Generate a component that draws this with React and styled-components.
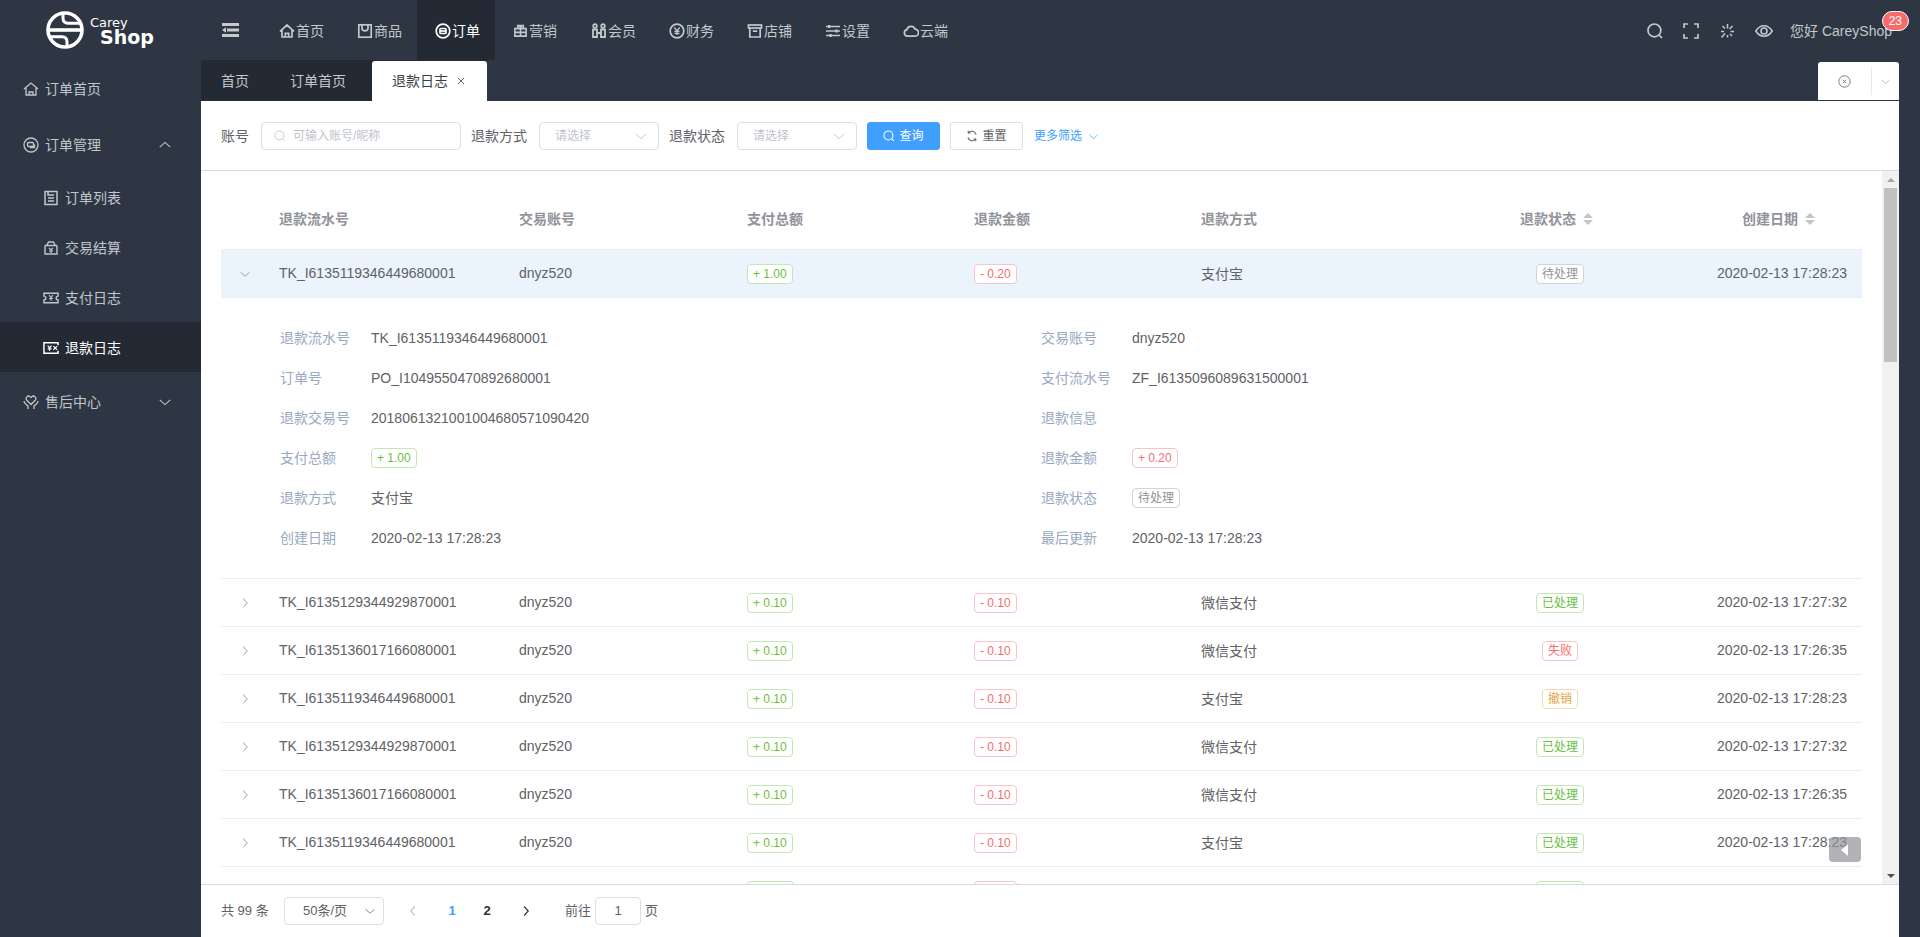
import React from 'react';
import styled, { createGlobalStyle } from 'styled-components';

const GlobalStyle = createGlobalStyle`
  html, body { margin: 0; padding: 0; height: 100%; overflow: hidden; background: #2d3642; }
  body { font-family: "Liberation Sans", "Noto Sans CJK SC", sans-serif; font-size: 14px; line-height: 20px; color: #606266; }
  * { box-sizing: border-box; }
  svg { flex: none; }
`;

const Shell = styled.div`display: flex; flex-direction: column; width: 1920px; height: 937px; background: #2d3642;`;
const Header = styled.header`display: flex; align-items: stretch; height: 60px; flex: none;`;
const Logo = styled.div`display: flex; align-items: center; width: 200px; padding-left: 46px; gap: 6px; color: #fff;`;
const LogoWords = styled.div`display: flex; flex-direction: column; padding-top: 2px; font-family: "DejaVu Sans", sans-serif; line-height: 1;`;
const LogoCarey = styled.span`font-size: 13px; font-weight: 400; height: 12px;`;
const LogoShop = styled.span`font-size: 19px; font-weight: 700; margin-left: 10px;`;
const Fold = styled.div`display: flex; align-items: center; width: 61px; padding-left: 22px; color: #c5c9ce;`;
const TopNav = styled.nav`display: flex;`;
const TopItem = styled.a`
  display: flex; align-items: center; width: 78px; padding: 1px 0 0 18px; gap: 1px;
  color: ${p => (p.$active ? '#fff' : '#c3c8ce')};
  background: ${p => (p.$active ? '#232a33' : 'transparent')};
`;
const Tools = styled.div`display: flex; align-items: center; margin-left: auto; padding: 1px 28px 0 0; color: #c3c8ce;`;
const ToolIcon = styled.span`display: flex; width: 36px;`;
const User = styled.span`position: relative; margin-left: -1px; color: #c3c8ce; white-space: nowrap;`;
const Badge = styled.span`
  position: absolute; top: -10px; right: -17px; height: 20px; padding: 0 6px; line-height: 18px;
  border: 1px solid #fff; border-radius: 10px; background: #f56c6c; color: #fff; font-size: 12px;
`;
const Body = styled.div`display: flex; flex: 1; min-height: 0;`;
const Sidebar = styled.aside`width: 201px; flex: none; padding-top: 4px;`;
const SideItem = styled.a`
  display: flex; align-items: center; height: 50px; gap: 6px;
  padding: ${p => (p.$low ? '2px' : '0')} 29px 0 ${p => (p.$sub ? '43px' : '23px')};
  margin-bottom: ${p => p.$after || 0}px;
  color: ${p => (p.$active ? '#fff' : '#c0c6cc')};
  background: ${p => (p.$active ? '#232a33' : 'transparent')};
`;
const SideArrow = styled.span`display: flex; margin-left: auto; color: #c0c6cc;`;
const Main = styled.main`display: flex; flex-direction: column; width: 1698px; flex: none;`;
const TabStrip = styled.div`display: flex; height: 41px; flex: none;`;
const TabList = styled.div`display: flex; background: #232a33; border-top-left-radius: 3px;`;
const Tab = styled.a`
  display: flex; align-items: center; height: 41px; width: ${p => p.$w}px; padding-left: 20px; color: #c3c8ce;
`;
const ActiveTab = styled.a`
  display: flex; align-items: center; gap: 8px; height: 40px; margin-top: 1px; padding: 0 19px 0 20px;
  background: #fff; color: #3a3f47; border-radius: 3px 3px 0 0; width: 115px;
`;
const TabActions = styled.div`
  display: flex; align-items: center; margin: 2px 0 1px auto; width: 81px; background: #fff; border-radius: 3px 3px 0 0; color: #66707c;
`;
const TabClose = styled.span`display: flex; justify-content: center; width: 53px;`;
const TabMore = styled.span`display: flex; justify-content: center; width: 28px; height: 28px; align-items: center; border-left: 1px solid #e6e8ec; color: #9aa3ad;`;
const Panel = styled.section`display: flex; flex-direction: column; flex: 1; min-height: 0; background: #fff;`;
const FilterBar = styled.div`
  display: flex; align-items: center; height: 70px; flex: none; padding: 1px 0 0 20px; border-bottom: 1px solid #d3dce6;
`;
const FieldLabel = styled.label`margin-right: 12px; white-space: nowrap;`;
const TextInput = styled.div`
  display: flex; align-items: center; gap: 7px; width: 200px; height: 28px; padding-left: 12px; margin-right: 10px;
  border: 1px solid #dcdfe6; border-radius: 4px; font-size: 12px; color: #c0c4cc;
`;
const SelectBox = styled.div`
  display: flex; align-items: center; justify-content: space-between; width: 120px; height: 28px; padding: 0 10px 0 15px;
  margin-right: 10px; border: 1px solid #dcdfe6; border-radius: 4px; font-size: 12px; color: #c0c4cc;
`;
const Btn = styled.button`
  display: inline-flex; align-items: center; justify-content: center; gap: 4px; width: 73px; height: 28px; margin-right: 10px; padding: 0;
  font: inherit; font-size: 12px; border-radius: 3px;
  border: 1px solid ${p => (p.$primary ? '#409eff' : '#dcdfe6')};
  background: ${p => (p.$primary ? '#409eff' : '#fff')};
  color: ${p => (p.$primary ? '#fff' : '#606266')};
`;
const MoreLink = styled.a`display: flex; align-items: center; gap: 6px; padding-left: 1px; font-size: 12px; color: #409eff;`;
const TableWrap = styled.div`position: relative; display: flex; flex: 1; min-height: 0;`;
const TableArea = styled.div`flex: 1; min-width: 0; padding: 0 20px; overflow: hidden;`;
const cols = '48px 240px 228px 227px 227px 227px 284px 160px';
const HeadRow = styled.div`
  display: grid; grid-template-columns: ${cols}; align-items: center; height: 79px; padding-top: 17px; border-bottom: 1px solid #ebeef5;
  font-weight: 700; color: #909399;
`;
const Row = styled.div`
  display: grid; grid-template-columns: ${cols}; align-items: center; height: 48px; border-bottom: 1px solid #ebeef5;
  background: ${p => (p.$open ? '#ebf3fd' : 'transparent')};
`;
const Cell = styled.div`
  display: flex; align-items: center; padding: 0 10px; white-space: nowrap;
  justify-content: ${p => (p.$center ? 'center' : 'flex-start')};
  margin-top: ${p => (p.$lift ? '-1px' : '0')};
`;
const Expander = styled.div`display: flex; justify-content: center; color: #7f848c;`;
const SortCarets = styled.span`display: flex; flex-direction: column; align-items: center; justify-content: center; gap: 2px; width: 24px;`;
const CaretUp = styled.i`display: block; border: 5px solid transparent; border-top: 0; border-bottom: 5px solid #c0c4cc;`;
const CaretDown = styled.i`display: block; border: 5px solid transparent; border-bottom: 0; border-top: 5px solid #c0c4cc;`;
const tagTones = {
  success: ['#67c23a', '#c2e7b0'],
  danger: ['#f56c6c', '#fbc4c4'],
  warning: ['#e6a23c', '#f5dab1'],
  info: ['#909399', '#d3d4d6'],
};
const Tag = styled.span`
  display: inline-block; height: 20px; padding: 0 5px; line-height: 18px; font-size: 12px; border-radius: 4px; background: #fff;
  color: ${p => tagTones[p.$tone][0]}; border: 1px solid ${p => tagTones[p.$tone][1]};
`;
const TagFrame = styled(Tag)`width: ${p => p.$w}px;`;
const Detail = styled.div`
  display: grid; grid-template-columns: 761px 1fr; grid-auto-rows: 40px; height: 281px; padding: 20px 0 0 59px; border-bottom: 1px solid #ebeef5;
`;
const DetailItem = styled.div`display: flex; align-items: center;`;
const DetailLabel = styled.span`width: 91px; color: #99a9bf; flex: none;`;
const Scrollbar = styled.div`display: flex; flex-direction: column; align-items: center; width: 17px; flex: none; background: #f1f1f1;`;
const ScrollArrow = styled.div`display: flex; align-items: center; justify-content: center; width: 17px; height: 17px; flex: none;`;
const TriUp = styled.i`border: 4px solid transparent; border-top: 0; border-bottom: 4px solid #a3a3a3;`;
const TriDown = styled.i`border: 4px solid transparent; border-bottom: 0; border-top: 4px solid #505050;`;
const Thumb = styled.div`width: 13px; height: 174px; background: #c1c1c1;`;
const Spacer = styled.div`flex: 1;`;
const BackTop = styled.div`
  position: absolute; right: 38px; bottom: 22px; display: flex; align-items: center; justify-content: center;
  width: 32px; height: 25px; border-radius: 4px; background: rgba(144, 147, 153, .7); color: #fff;
`;
const Footer = styled.footer`
  display: flex; align-items: center; height: 53px; flex: none; padding: 0 0 0 20px; border-top: 1px solid #d3dce6; font-size: 13px;
`;
const Total = styled.span`width: 63px;`;
const PageSelect = styled.div`
  display: flex; align-items: center; justify-content: space-between; width: 100px; height: 28px; padding: 0 7px 0 18px;
  border: 1px solid #dcdfe6; border-radius: 4px; margin-right: 19px;
`;
const PageArrow = styled.span`display: flex; justify-content: center; width: 20px; color: ${p => p.$color};`;
const PageNums = styled.div`display: flex; padding: 0 11.5px;`;
const PageNum = styled.span`width: 35px; text-align: center; font-weight: 700; color: ${p => (p.$active ? '#409eff' : '#303133')};`;
const Goto = styled.span`margin-left: 29px;`;
const PageInput = styled.div`
  display: flex; align-items: center; justify-content: center; width: 46px; height: 28px; margin: 0 4px;
  border: 1px solid #dcdfe6; border-radius: 4px;
`;

const Svg = ({ s = 16, children, ...r }) => (
  <svg width={s} height={s} viewBox="0 0 16 16" fill="none" stroke="currentColor" strokeWidth="1.7" {...r}>{children}</svg>
);
const I = {
  fold: <svg width="17" height="14" viewBox="0 0 17 14" fill="currentColor"><rect x="0" y="0" width="17" height="3" /><rect x="5" y="5.5" width="12" height="3" /><rect x="0" y="11" width="17" height="3" /><path d="M4 4.2v5.600L0 7z" /></svg>,
  home: <Svg><path d="M1 8.300 8 2l7 6.300M3 7v7h10V7M6.300 14v-3.600h3.400V14" /></Svg>,
  goods: <Svg><rect x="1.800" y="1.800" width="12.400" height="12.400" /><path d="M5 2v3.200a3 2.600 0 0 0 6 0V2" /></Svg>,
  order: <Svg><circle cx="8" cy="8" r="6.800" /><rect x="5" y="5.500" width="6" height="5" rx="1" /><path d="M5 8h6" /></Svg>,
  market: <Svg s={15}><path d="M2 6h12v8H2zM2 10h12M8 6v8M5 6V2.800h2.400V6M8.600 6V2.800H11V6" strokeWidth="1.700" /></Svg>,
  member: <Svg><circle cx="4" cy="3" r="1.800" /><circle cx="12" cy="3" r="1.800" /><path d="M2 6.500h4V14H2zM10 6.500h4V14h-4zM6 10h4" strokeWidth="1.800" /></Svg>,
  money: <Svg><circle cx="8" cy="8" r="6.800" /><path d="m5.400 4.500 2.600 3.600 2.600-3.600M8 8v4M5.500 8.400h5M5.500 10.300h5" strokeWidth="1.300" /></Svg>,
  shop: <Svg><rect x="1.500" y="2" width="13" height="3" /><path d="M2.800 5v9h10.400V5M5.800 8.200h4.400" /></Svg>,
  set: <Svg><path d="M1 3.500h14M1 8h14M1 12.500h14" strokeWidth="1.400" /><path d="M4.200 2v3M11.500 6.500v3M5.500 11v3" strokeWidth="2.400" /></Svg>,
  cloud: <Svg><path d="M4.500 13.200a3.300 3.300 0 0 1-.6-6.500 4.300 4.300 0 0 1 8.200-.5 3.500 3.500 0 0 1-.2 7z" /></Svg>,
  search: <Svg><circle cx="7.400" cy="7.400" r="6.400" /><path d="m12 12 3 3" /></Svg>,
  full: <Svg><path d="M5 1H1v4M11 1h4v4M5 15H1v-4M11 15h4v-4" /></Svg>,
  spin: <Svg><path d="M8.500 1v4.500M13.500 3l-3 3M15 8.500h-3.500M3.500 3l2.500 2.500M2 8.500h3M6 10.500l-3.500 4M11 11l2 2M8.500 12v2.500" strokeWidth="1.500" /></Svg>,
  eye: <svg width="18" height="16" viewBox="0 0 18 16" fill="none" stroke="currentColor" strokeWidth="1.600"><path d="M.8 8C3 4.500 5.800 2.800 9 2.800s6 1.700 8.200 5.200c-2.200 3.500-5 5.200-8.200 5.200S3 11.500.8 8z" /><circle cx="9" cy="8" r="3" /></svg>,
  sHome: <Svg strokeWidth="1.300"><path d="M1 8 8 2l7 6M3 7v7h10V7M6 14v-3h4v3" /></Svg>,
  sOrder: <Svg strokeWidth="1.300"><circle cx="8" cy="8" r="7" /><rect x="4.500" y="5.500" width="6" height="4" rx="1" /><path d="M7 10.500h4.500V7.500" /></Svg>,
  sList: <Svg strokeWidth="1.500"><path d="M2 1.500h12v13H2zM5 1.500V5h6M5 8h6M5 11h6" /></Svg>,
  sBag: <Svg strokeWidth="1.400"><path d="M4 5 5.500 2h5L12 5M2 5.500h12M2 5.500V14h12V5.500" /><path d="m6 8 2 2 2-2M8 10v3M6 11h4" strokeWidth="1.200" /></Svg>,
  sPay: <svg width="16" height="16" viewBox="0 0 17 16" fill="none" stroke="currentColor" strokeWidth="1.500"><path d="M1 3h15v3a2 2 0 0 0 0 4v3H1v-3a2 2 0 0 0 0-4z" /><path d="m6.500 5 2 2.500 2-2.500M8.500 7.500V11M6.500 8.500h4" strokeWidth="1.200" /></svg>,
  sRefund: <svg width="16" height="16" viewBox="0 0 17 16" fill="none" stroke="currentColor" strokeWidth="1.600"><path d="M16 5V2.500H1v11h15V11" /><path d="m5 5.500 2 2.500 2-2.500M7 8v3M5 9h4M11 6l4 4M15 6l-4 4" strokeWidth="1.300" /></svg>,
  sAfter: <Svg strokeWidth="1.300"><path d="M8 10.500 3.800 6.300a2.400 2.400 0 0 1 0-3.400 2.500 2.500 0 0 1 3.500 0l.7.700.7-.7a2.500 2.500 0 0 1 3.500 0 2.400 2.400 0 0 1 0 3.400z" /><path d="M1 7c0 3 2.500 3.500 4 5v3M15 7c0 3-2.500 3.500-4 5v3" /></Svg>,
  circleX: <Svg s={13} strokeWidth="1.100"><circle cx="8" cy="8" r="7" /><path d="m6 6 4 4M10 6l-4 4" /></Svg>,
  refresh: <Svg s={12} strokeWidth="1.400"><path d="M13.500 6A6 6 0 0 0 3 4M2.500 10A6 6 0 0 0 13 12" /><path d="M3 1v3h3M13 15v-3h-3" /></Svg>,
};
const Chevron = ({ dir = 'down', s = 12, w = 1 }) => {
  const d = { down: 'M2 5.500 8 11l6-5.500', up: 'M2 10.500 8 5l6 5.500', right: 'M5.500 2 11 8l-5.500 6', left: 'M10.500 2 5 8l5.500 6' }[dir];
  return <Svg s={s} strokeWidth={w}><path d={d} /></Svg>;
};
const X = () => <Svg s={10} strokeWidth="1.300"><path d="m3 3 10 10M13 3 3 13" /></Svg>;
const Glass = ({ s = 12, w = 1.200 }) => <Svg s={s} strokeWidth={w}><circle cx="7.200" cy="7.200" r="6" /><path d="m11.500 11.500 3 3" /></Svg>;

const topNav = [['首页', 'home'], ['商品', 'goods'], ['订单', 'order', true], ['营销', 'market'], ['会员', 'member'], ['财务', 'money'], ['店铺', 'shop'], ['设置', 'set'], ['云端', 'cloud']];
const statusTone = { 已处理: 'success', 失败: 'danger', 撤销: 'warning', 待处理: 'info' };
const A = 'TK_I6135119346449680001', B = 'TK_I6135129344929870001', C = 'TK_I6135136017166080001';
const list = [
  [B, '微信支付', '已处理', '2020-02-13 17:27:32'],
  [C, '微信支付', '失败', '2020-02-13 17:26:35'],
  [A, '支付宝', '撤销', '2020-02-13 17:28:23'],
  [B, '微信支付', '已处理', '2020-02-13 17:27:32'],
  [C, '微信支付', '已处理', '2020-02-13 17:26:35'],
  [A, '支付宝', '已处理', '2020-02-13 17:28:23'],
];

const RowCells = ({ id, total, refund, method, status, date }) => (
  <>
    <Cell $lift>{id}</Cell>
    <Cell $lift>dnyz520</Cell>
    <Cell><Tag $tone="success">{total}</Tag></Cell>
    <Cell><Tag $tone="danger">{refund}</Tag></Cell>
    <Cell>{method}</Cell>
    <Cell $center><Tag $tone={statusTone[status]}>{status}</Tag></Cell>
    <Cell $center $lift>{date}</Cell>
  </>
);
const Sort = () => <SortCarets><CaretUp /><CaretDown /></SortCarets>;

export default function App() {
  return (
    <Shell>
      <GlobalStyle />
      <Header>
        <Logo>
          <svg width="38" height="38" viewBox="0 0 38 38" fill="none" stroke="#fff">
            <circle cx="19" cy="19" r="17" strokeWidth="3.600" />
            <path d="M3 19h32" strokeWidth="3.600" />
            <path d="M17 3v4c0 3 1.500 5.300 5 5.300h13" strokeWidth="3" />
            <path d="M21 35v-4c0-3-1.500-5.300-5-5.300H3" strokeWidth="3" />
          </svg>
          <LogoWords>
            <LogoCarey>Carey</LogoCarey>
            <LogoShop>Shop</LogoShop>
          </LogoWords>
        </Logo>
        <Fold>{I.fold}</Fold>
        <TopNav>
          {topNav.map(([t, ic, act]) => <TopItem key={t} $active={act}>{I[ic]}{t}</TopItem>)}
        </TopNav>
        <Tools>
          <ToolIcon>{I.search}</ToolIcon>
          <ToolIcon>{I.full}</ToolIcon>
          <ToolIcon>{I.spin}</ToolIcon>
          <ToolIcon>{I.eye}</ToolIcon>
          <User>您好 CareyShop<Badge>23</Badge></User>
        </Tools>
      </Header>
      <Body>
        <Sidebar>
          <SideItem $after={6}>{I.sHome}订单首页</SideItem>
          <SideItem $after={2}>{I.sOrder}订单管理<SideArrow><Chevron dir="up" s={14} w={1.200} /></SideArrow></SideItem>
          <SideItem $sub $low>{I.sList}订单列表</SideItem>
          <SideItem $sub $low>{I.sBag}交易结算</SideItem>
          <SideItem $sub $low>{I.sPay}支付日志</SideItem>
          <SideItem $sub $low $active $after={4}>{I.sRefund}退款日志</SideItem>
          <SideItem $low>{I.sAfter}售后中心<SideArrow><Chevron s={14} w={1.200} /></SideArrow></SideItem>
        </Sidebar>
        <Main>
          <TabStrip>
            <TabList>
              <Tab $w={69}>首页</Tab>
              <Tab $w={102}>订单首页</Tab>
              <ActiveTab>退款日志<X /></ActiveTab>
            </TabList>
            <TabActions>
              <TabClose>{I.circleX}</TabClose>
              <TabMore><Chevron s={11} /></TabMore>
            </TabActions>
          </TabStrip>
          <Panel>
            <FilterBar>
              <FieldLabel>账号</FieldLabel>
              <TextInput><Glass />可输入账号/昵称</TextInput>
              <FieldLabel>退款方式</FieldLabel>
              <SelectBox>请选择<Chevron s={14} /></SelectBox>
              <FieldLabel>退款状态</FieldLabel>
              <SelectBox>请选择<Chevron s={14} /></SelectBox>
              <Btn $primary><Glass s={12} w={1.400} />查询</Btn>
              <Btn>{I.refresh}重置</Btn>
              <MoreLink>更多筛选<Chevron s={11} /></MoreLink>
            </FilterBar>
            <TableWrap>
              <TableArea>
                <HeadRow>
                  <div />
                  <Cell>退款流水号</Cell>
                  <Cell>交易账号</Cell>
                  <Cell>支付总额</Cell>
                  <Cell>退款金额</Cell>
                  <Cell>退款方式</Cell>
                  <Cell $center>退款状态<Sort /></Cell>
                  <Cell $center>创建日期<Sort /></Cell>
                </HeadRow>
                <Row $open>
                  <Expander><Chevron s={12} /></Expander>
                  <RowCells id={A} total="+ 1.00" refund="- 0.20" method="支付宝" status="待处理" date="2020-02-13 17:28:23" />
                </Row>
                <Detail>
                  <DetailItem><DetailLabel>退款流水号</DetailLabel>{A}</DetailItem>
                  <DetailItem><DetailLabel>交易账号</DetailLabel>dnyz520</DetailItem>
                  <DetailItem><DetailLabel>订单号</DetailLabel>PO_I1049550470892680001</DetailItem>
                  <DetailItem><DetailLabel>支付流水号</DetailLabel>ZF_I6135096089631500001</DetailItem>
                  <DetailItem><DetailLabel>退款交易号</DetailLabel>2018061321001004680571090420</DetailItem>
                  <DetailItem><DetailLabel>退款信息</DetailLabel></DetailItem>
                  <DetailItem><DetailLabel>支付总额</DetailLabel><Tag $tone="success">+ 1.00</Tag></DetailItem>
                  <DetailItem><DetailLabel>退款金额</DetailLabel><Tag $tone="danger">+ 0.20</Tag></DetailItem>
                  <DetailItem><DetailLabel>退款方式</DetailLabel>支付宝</DetailItem>
                  <DetailItem><DetailLabel>退款状态</DetailLabel><Tag $tone="info">待处理</Tag></DetailItem>
                  <DetailItem><DetailLabel>创建日期</DetailLabel>2020-02-13 17:28:23</DetailItem>
                  <DetailItem><DetailLabel>最后更新</DetailLabel>2020-02-13 17:28:23</DetailItem>
                </Detail>
                {list.map(([id, method, status, date], i) => (
                  <Row key={i}>
                    <Expander><Chevron dir="right" s={12} /></Expander>
                    <RowCells id={id} total="+ 0.10" refund="- 0.10" method={method} status={status} date={date} />
                  </Row>
                ))}
                <Row>
                  <div />
                  <div />
                  <div />
                  <Cell><TagFrame $tone="success" $w={47} /></Cell>
                  <Cell><TagFrame $tone="danger" $w={43} /></Cell>
                  <div />
                  <Cell $center><TagFrame $tone="success" $w={48} /></Cell>
                  <div />
                </Row>
              </TableArea>
              <Scrollbar>
                <ScrollArrow><TriUp /></ScrollArrow>
                <Thumb />
                <Spacer />
                <ScrollArrow><TriDown /></ScrollArrow>
              </Scrollbar>
              <BackTop>
                <svg width="8" height="12" viewBox="0 0 8 12" fill="currentColor"><path d="M7 0v12L0 6z" /></svg>
              </BackTop>
            </TableWrap>
            <Footer>
              <Total>共 99 条</Total>
              <PageSelect>50条/页<Chevron s={12} /></PageSelect>
              <PageArrow $color="#c0c4cc"><Chevron dir="left" s={12} w={1.500} /></PageArrow>
              <PageNums>
                <PageNum $active>1</PageNum>
                <PageNum>2</PageNum>
              </PageNums>
              <PageArrow $color="#303133"><Chevron dir="right" s={12} w={1.500} /></PageArrow>
              <Goto>前往</Goto>
              <PageInput>1</PageInput>
              页
            </Footer>
          </Panel>
        </Main>
      </Body>
    </Shell>
  );
}
